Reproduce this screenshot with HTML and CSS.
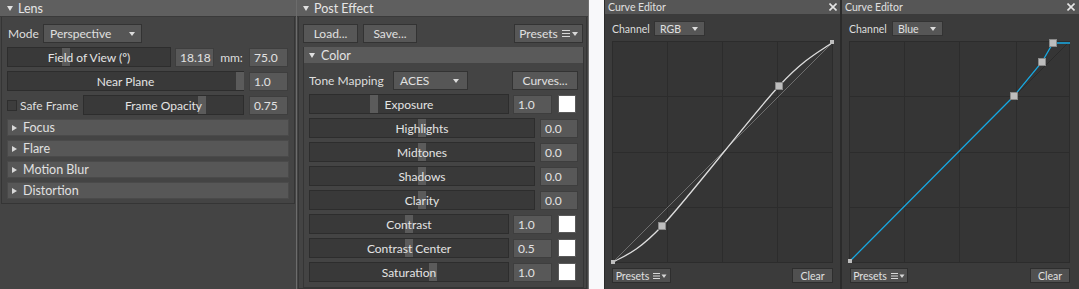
FILE: index.html
```html
<!DOCTYPE html>
<html>
<head>
<meta charset="utf-8">
<link rel="stylesheet" href="styles.css">
</head>
<body>
<div class="app">
  <section class="panel lens">
    <div class="hdr"><span class="tri-down"></span>Lens</div>
    <div class="box">
      <div class="row">
        <span class="lbl lbl-mode">Mode</span>
        <div class="dropdown dd-persp">Perspective<span class="caret"></span></div>
      </div>
      <div class="row">
        <div class="slider sl-fov"><span class="handle" style="left:54px"></span><span class="stext">Field of View (º)</span></div>
        <div class="val">18.18</div>
        <span class="lbl lbl-mm">mm:</span>
        <div class="val">75.0</div>
      </div>
      <div class="row">
        <div class="slider sl-near"><span class="handle" style="left:228px"></span><span class="stext">Near Plane</span></div>
        <div class="val">1.0</div>
      </div>
      <div class="row">
        <span class="check"></span>
        <span class="lbl lbl-safe">Safe Frame</span>
        <div class="slider sl-opac"><span class="handle" style="left:114px"></span><span class="stext">Frame Opacity</span></div>
        <div class="val">0.75</div>
      </div>
      <div class="fold"><span class="tri-right"></span>Focus</div>
      <div class="fold"><span class="tri-right"></span>Flare</div>
      <div class="fold"><span class="tri-right"></span>Motion Blur</div>
      <div class="fold"><span class="tri-right"></span>Distortion</div>
    </div>
  </section>
  <div class="sep"></div>
  <section class="panel post">
    <div class="hdr hdr-post"><span class="tri-down"></span>Post Effect</div>
    <div class="box box-post">
      <div class="row">
        <div class="btn b-load">Load...</div>
        <div class="btn b-save">Save...</div>
        <div class="btn b-presets">Presets <svg class="menu-ico" width="16" height="9" viewBox="0 0 16 9"><path d="M0 1.5h8M0 4.5h8M0 7.5h8" stroke="#d8d8d8" stroke-width="1"/><path d="M10 3h6l-3 4z" fill="#d8d8d8"/></svg></div>
      </div>
      <div class="group">
        <div class="ghdr"><span class="tri-down"></span>Color</div>
        <div class="gbody">
          <div class="row">
            <span class="lbl lbl-tone">Tone Mapping</span>
            <div class="dropdown dd-aces">ACES<span class="caret"></span></div>
            <div class="btn b-curves">Curves...</div>
          </div>
          <div class="row">
            <div class="slider sl-short"><span class="handle" style="left:60px"></span><span class="stext">Exposure</span></div>
            <div class="val">1.0</div>
            <span class="swatch"></span>
          </div>
          <div class="row">
            <div class="slider sl-long"><span class="handle" style="left:108px"></span><span class="stext">Highlights</span></div>
            <div class="val val-w">0.0</div>
          </div>
          <div class="row">
            <div class="slider sl-long"><span class="handle" style="left:108px"></span><span class="stext">Midtones</span></div>
            <div class="val val-w">0.0</div>
          </div>
          <div class="row">
            <div class="slider sl-long"><span class="handle" style="left:108px"></span><span class="stext">Shadows</span></div>
            <div class="val val-w">0.0</div>
          </div>
          <div class="row">
            <div class="slider sl-long"><span class="handle" style="left:108px"></span><span class="stext">Clarity</span></div>
            <div class="val val-w">0.0</div>
          </div>
          <div class="row">
            <div class="slider sl-short"><span class="handle" style="left:95px"></span><span class="stext">Contrast</span></div>
            <div class="val">1.0</div>
            <span class="swatch"></span>
          </div>
          <div class="row">
            <div class="slider sl-short"><span class="handle" style="left:95px"></span><span class="stext">Contrast Center</span></div>
            <div class="val">0.5</div>
            <span class="swatch"></span>
          </div>
          <div class="row">
            <div class="slider sl-short"><span class="handle" style="left:119px"></span><span class="stext">Saturation</span></div>
            <div class="val">1.0</div>
            <span class="swatch"></span>
          </div>
        </div>
      </div>
    </div>
  </section>
  <div class="gap"></div>
  <section class="curve c1">
    <div class="chdr"><span>Curve Editor</span><svg width="8" height="8" viewBox="0 0 8 8"><path d="M0.5 0.5L7.5 7.5M7.5 0.5L0.5 7.5" stroke="#e6e6e6" stroke-width="1.6"/></svg></div>
    <div class="cbody">
      <div class="crow">
        <span class="clbl">Channel</span>
        <div class="dropdown cdd">RGB<span class="caret"></span></div>
      </div>
      <svg class="graph" width="221" height="222" viewBox="0 0 221 222">
        <rect x="0.5" y="0.5" width="220" height="221" fill="#353535" stroke="#2c2c2c"/>
        <path d="M55.5 0V222M110.5 0V222M165.5 0V222M0 55.5H221M0 111.5H221M0 166.5H221" stroke="#2c2c2c" stroke-width="1"/>
        <path d="M0 222L221 1" stroke="#6e6e6e" stroke-width="1"/>
        <path d="M0 222C8.3 215.8 22.2 214.5 50 185C77.8 155.5 138.5 75.7 167 45C195.5 14.3 212 8.3 221 1" fill="none" stroke="#dedede" stroke-width="1.3"/>
        <rect x="46.5" y="181.5" width="7" height="7" fill="#bdbdbd" stroke="#8a8a8a"/>
        <rect x="163.5" y="41.5" width="7" height="7" fill="#bdbdbd" stroke="#8a8a8a"/>
        <rect x="-1" y="219" width="4" height="4" fill="#bdbdbd"/>
        <rect x="218" y="-1" width="4" height="4" fill="#bdbdbd"/>
      </svg>
      <div class="brow">
        <div class="btn cbtn b-cpresets">Presets <svg class="menu-ico" width="14" height="8" viewBox="0 0 14 8"><path d="M0 1.5h7M0 4h7M0 6.5h7" stroke="#d8d8d8" stroke-width="1"/><path d="M8.5 2.5h5l-2.5 3.5z" fill="#d8d8d8"/></svg></div>
        <div class="btn cbtn b-clear">Clear</div>
      </div>
    </div>
  </section>
  <section class="curve c2">
    <div class="chdr"><span>Curve Editor</span><svg width="8" height="8" viewBox="0 0 8 8"><path d="M0.5 0.5L7.5 7.5M7.5 0.5L0.5 7.5" stroke="#e6e6e6" stroke-width="1.6"/></svg></div>
    <div class="cbody">
      <div class="crow">
        <span class="clbl">Channel</span>
        <div class="dropdown cdd">Blue<span class="caret"></span></div>
      </div>
      <svg class="graph" width="221" height="222" viewBox="0 0 221 222">
        <rect x="0.5" y="0.5" width="220" height="221" fill="#353535" stroke="#2c2c2c"/>
        <path d="M55.5 0V222M110.5 0V222M167.5 0V222M0 55.5H221M0 111.5H221M0 166.5H221" stroke="#2c2c2c" stroke-width="1"/>
        <path d="M0 221L221 0" stroke="#2a2a2a" stroke-width="1"/>
        <polyline points="1,220 165,55 193,21 204,2 221,2" fill="none" stroke="#17a9e3" stroke-width="1.3"/>
        <rect x="161.5" y="51.5" width="7" height="7" fill="#bdbdbd" stroke="#8a8a8a"/>
        <rect x="189.5" y="17.5" width="7" height="7" fill="#bdbdbd" stroke="#8a8a8a"/>
        <rect x="200.5" y="-1.5" width="7" height="7" fill="#bdbdbd" stroke="#8a8a8a"/>
        <rect x="-1" y="218" width="4" height="4" fill="#bdbdbd"/>
      </svg>
      <div class="brow">
        <div class="btn cbtn b-cpresets2">Presets <svg class="menu-ico" width="14" height="8" viewBox="0 0 14 8"><path d="M0 1.5h7M0 4h7M0 6.5h7" stroke="#d8d8d8" stroke-width="1"/><path d="M8.5 2.5h5l-2.5 3.5z" fill="#d8d8d8"/></svg></div>
        <div class="btn cbtn b-clear2">Clear</div>
      </div>
    </div>
  </section>
</div>
</body>
</html>
```

FILE: styles.css
```css
* { box-sizing: border-box; margin: 0; padding: 0; }
html, body { width: 1079px; height: 289px; overflow: hidden; }
body {
  background: #f8f8fa;
  font-family: Lato, "Open Sans", sans-serif;
  font-size: 12px;
  color: #dcdcdc;
}
.app { display: flex; height: 289px; }

.panel { background: #444; height: 289px; display: flex; flex-direction: column; }
.lens { width: 296px; }
.sep { width: 1px; height: 289px; background: #6c6c6c; }
.post { width: 292px; border-right: 1px solid #707070; }
.gap { width: 15px; }

.hdr {
  height: 17px;
  background: #5f5f5f;
  border-bottom: 1px solid #3a3a3a;
  display: flex;
  align-items: center;
  gap: 5px;
  padding-left: 7px;
  font-size: 12.5px;
  color: #e6e6e6;
  flex-shrink: 0;
}
.hdr-post { padding-left: 6px; }

.tri-down {
  width: 0; height: 0;
  border-left: 3px solid transparent;
  border-right: 3px solid transparent;
  border-top: 5px solid #e0e0e0;
}
.tri-right {
  width: 0; height: 0;
  border-top: 3.5px solid transparent;
  border-bottom: 3.5px solid transparent;
  border-left: 5px solid #d8d8d8;
}

.box {
  margin: 0 1px;
  border: 1px solid #353535;
  border-top: 0;
  padding: 6px 5px 4px 5px;
  display: flex;
  flex-direction: column;
  gap: 4px;
}
.box-post { padding: 6px 2px 0 4px; flex: 1; }

.row { display: flex; align-items: center; height: 20px; flex-shrink: 0; }

.lbl { color: #dedede; font-size: 12px; white-space: nowrap; flex-shrink: 0; overflow: hidden; }
.lbl-mode { width: 36px; padding-left: 1px; }
.lbl-mm { width: 35px; text-align: center; }
.lbl-safe { width: 66px; padding-left: 3px; }
.lbl-tone { width: 84px; }

.dropdown {
  position: relative;
  height: 19px;
  background: #565656;
  border: 1px solid #333;
  display: flex;
  align-items: center;
  padding-left: 6px;
  font-size: 12px;
  color: #e0e0e0;
  flex-shrink: 0;
}
.caret {
  position: absolute;
  right: 6px;
  top: 7px;
  width: 0; height: 0;
  border-left: 3.5px solid transparent;
  border-right: 3.5px solid transparent;
  border-top: 4px solid #dcdcdc;
}
.dd-persp { width: 99px; }
.dd-aces { width: 75px; }
.dd-aces .caret { right: 8px; }

.slider {
  position: relative;
  height: 20px;
  background: #393939;
  border: 1px solid #2d2d2d;
  display: flex;
  align-items: center;
  justify-content: center;
  flex-shrink: 0;
}
.handle {
  position: absolute;
  top: 0;
  width: 8px;
  height: 18px;
  background: #5b5b5b;
}
.stext { position: relative; font-size: 12px; color: #e4e4e4; white-space: nowrap; }
.sl-fov { width: 164px; margin-right: 4px; }
.sl-near { width: 237px; margin-right: 5px; }
.sl-opac { width: 161px; margin-right: 5px; }
.sl-short { width: 200px; margin-right: 4px; }
.sl-long { width: 226px; margin-right: 5px; }

.val {
  width: 39px;
  height: 19px;
  background: #585858;
  border: 1px solid #3e3e3e;
  display: flex;
  align-items: center;
  padding-left: 4px;
  font-size: 12px;
  color: #e2e2e2;
  flex-shrink: 0;
}
.val-w { width: 38px; }

.swatch {
  width: 18px;
  height: 18px;
  margin-left: 6px;
  background: #fff;
  border: 1px solid #5a5a5a;
  flex-shrink: 0;
}

.check {
  width: 10px;
  height: 11px;
  background: #3d3d3d;
  border: 1px solid #2e2e2e;
  flex-shrink: 0;
}

.fold {
  height: 17px;
  background: #575757;
  border: 1px solid #4a4a4a;
  display: flex;
  align-items: center;
  gap: 6px;
  padding-left: 4px;
  font-size: 12.5px;
  color: #e0e0e0;
  flex-shrink: 0;
}

.btn {
  height: 19px;
  background: #575757;
  border: 1px solid #333;
  display: flex;
  align-items: center;
  justify-content: center;
  font-size: 12px;
  color: #e0e0e0;
  white-space: nowrap;
  flex-shrink: 0;
}
.b-load { width: 55px; margin-right: 5px; }
.b-save { width: 54px; }
.b-presets { width: 69px; margin-left: auto; margin-right: 1px; gap: 4px; }
.b-curves { width: 66px; margin-left: auto; }
.menu-ico { display: block; }

.group {
  border: 1px solid #353535;
  border-top: 0;
  flex: 1;
  display: flex;
  flex-direction: column;
}
.ghdr {
  height: 16px;
  background: #5a5a5a;
  display: flex;
  align-items: center;
  gap: 6px;
  padding-left: 5px;
  font-size: 12.5px;
  color: #e2e2e2;
  flex-shrink: 0;
}
.gbody {
  padding: 7px 5px 4px 5px;
  display: flex;
  flex-direction: column;
  gap: 4px;
}

.curve { background: #3b3b3b; height: 289px; display: flex; flex-direction: column; }
.c1 { width: 236px; border-left: 1px solid #2b2b2b; }
.c2 { width: 239px; border-left: 2px solid #2b2b2b; }

.chdr {
  height: 14px;
  background: #565656;
  display: flex;
  align-items: center;
  justify-content: space-between;
  padding: 0 3px 0 3px;
  font-size: 10.5px;
  color: #e0e0e0;
  flex-shrink: 0;
}
.c2 .chdr { padding: 0 4px 0 3px; }

.cbody { padding: 7px 0 0 7px; display: flex; flex-direction: column; }
.crow { display: flex; align-items: center; height: 15px; }
.clbl { width: 42px; font-size: 10.5px; color: #dedede; flex-shrink: 0; }
.c2 .clbl { width: 43px; }
.cdd { width: 51px; height: 15px; font-size: 10.5px; padding-left: 5px; }
.cdd .caret { top: 5px; right: 6px; }

.graph { display: block; margin-top: 5px; overflow: visible; }

.brow { display: flex; justify-content: space-between; width: 221px; margin-top: 5px; }
.cbtn { height: 15px; font-size: 10.5px; background: #505050; border: 1px solid #2e2e2e; }
.b-cpresets { width: 59px; gap: 4px; }
.b-cpresets2 { width: 58px; gap: 4px; margin-left: 1px; }
.b-clear { width: 41px; }
.b-clear2 { width: 40px; }
```
